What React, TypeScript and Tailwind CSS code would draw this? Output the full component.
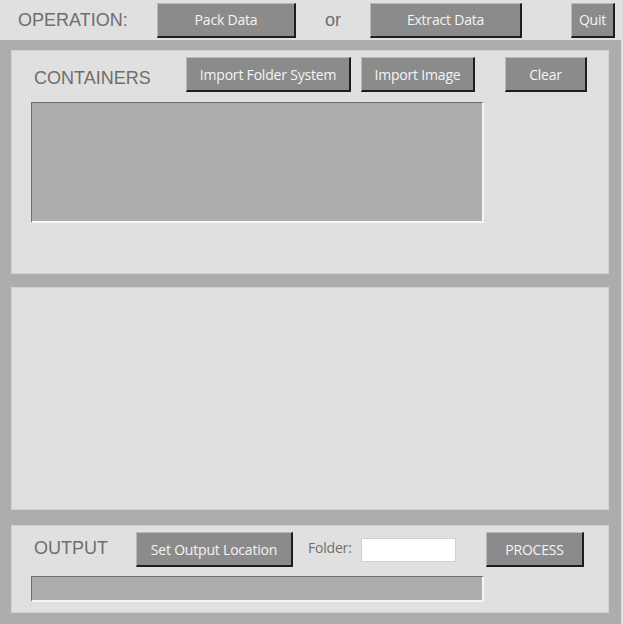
const btn =
  "flex items-center justify-center h-[35px] bg-[#8b8b8b] text-[#f4f4f4] text-[14px] border-t border-l border-t-[#b9b9b9] border-l-[#b9b9b9] border-b-2 border-r-2 border-b-[#1e1e1e] border-r-[#1e1e1e] font-['Open_Sans',sans-serif] tracking-[-0.2px] shrink-0";

const label = "text-[18px] text-[#6e6e6e] font-['Liberation_Sans',Arial,sans-serif] leading-none";

function Panel({ className, children }: { className?: string; children?: React.ReactNode }) {
  return (
    <div className={"bg-[#e0e0e0] border border-[#d2d2d2] " + (className ?? "")}>{children}</div>
  );
}

export default function App() {
  return (
    <div className="w-[623px] h-[624px] bg-[#e0e0e0] flex flex-col overflow-hidden">
      {/* operation bar */}
      <div className="h-[40px] flex items-center pl-[18px] shrink-0">
        <span className={label + " w-[139px] shrink-0"}>OPERATION:</span>
        <button className={btn + " w-[139px]"}>Pack Data</button>
        <span className={label + " w-[74px] pl-[29px] shrink-0"}>or</span>
        <button className={btn + " w-[152px]"}>Extract Data</button>
        <button className={btn + " w-[44px] ml-[49px]"}>Quit</button>
      </div>

      <div className="flex-1 mr-[2px] bg-[#adadad] pt-[10px] pl-[11px] pr-[12px] pb-[11px] flex flex-col">
        {/* containers */}
        <Panel className="h-[224px] pt-[6px]">
          <div className="flex items-center pl-[22px]">
            <span className={label + " w-[152px] pt-[6px] shrink-0"}>CONTAINERS</span>
            <button className={btn + " w-[165px]"}>Import Folder System</button>
            <button className={btn + " w-[114px] ml-[10px]"}>Import Image</button>
            <button className={btn + " w-[82px] ml-[30px]"}>Clear</button>
          </div>
          <div className="mt-[10px] ml-[19px] w-[453px] h-[121px] bg-[#adadad] border-t border-l border-t-[#6e6e6e] border-l-[#6e6e6e] border-b-2 border-r-2 border-b-[#f5f5f5] border-r-[#f5f5f5]" />
        </Panel>

        <Panel className="h-[223px] mt-[13px]" />

        {/* output */}
        <Panel className="h-[88px] mt-[15px] pt-[6px]">
          <div className="flex items-center pl-[22px]">
            <span className={label + " w-[102px] pb-[4px] shrink-0"}>OUTPUT</span>
            <button className={btn + " w-[157px]"}>Set Output Location</button>
            <span className="ml-[15px] w-[53px] shrink-0 pb-[4px] text-[14px] tracking-[-0.2px] text-[#6e6e6e] font-['Open_Sans',sans-serif]">Folder:</span>
            <div className="w-[95px] h-[24px] bg-white border border-[#d0d0d0] shrink-0" />
            <button className={btn + " w-[98px] ml-[30px]"}>PROCESS</button>
          </div>
          <div className="mt-[9px] ml-[19px] w-[453px] h-[26px] bg-[#adadad] border-t border-l border-t-[#6e6e6e] border-l-[#6e6e6e] border-b-2 border-r-2 border-b-[#f5f5f5] border-r-[#f5f5f5]" />
        </Panel>
      </div>
    </div>
  );
}
